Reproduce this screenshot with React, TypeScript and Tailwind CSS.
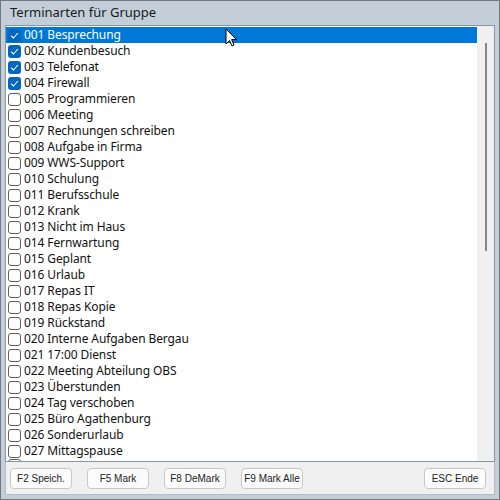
import React from 'react';

const items = [
  '001 Besprechung',
  '002 Kundenbesuch',
  '003 Telefonat',
  '004 Firewall',
  '005 Programmieren',
  '006 Meeting',
  '007 Rechnungen schreiben',
  '008 Aufgabe in Firma',
  '009 WWS-Support',
  '010 Schulung',
  '011 Berufsschule',
  '012 Krank',
  '013 Nicht im Haus',
  '014 Fernwartung',
  '015 Geplant',
  '016 Urlaub',
  '017 Repas IT',
  '018 Repas Kopie',
  '019 Rückstand',
  '020 Interne Aufgaben Bergau',
  '021 17:00 Dienst',
  '022 Meeting Abteilung OBS',
  '023 Überstunden',
  '024 Tag verschoben',
  '025 Büro Agathenburg',
  '026 Sonderurlaub',
  '027 Mittagspause',
];

const checked = [0, 1, 2, 3];

function CheckBox({ on }: { on: boolean }) {
  if (on) {
    return (
      <div className="w-[13px] h-[13px] rounded-[3px] bg-[#0067c0] flex items-center justify-center flex-shrink-0">
        <svg width="9" height="9" viewBox="0 0 9 9">
          <path d="M1 4.6 L3.4 7 L8 2" fill="none" stroke="white" strokeWidth="1.1" />
        </svg>
      </div>
    );
  }
  return <div className="w-[13px] h-[13px] rounded-[3px] border border-[#5f5f5f] bg-white flex-shrink-0" />;
}

function Btn({ label }: { label: string }) {
  return (
    <button
      className="w-[62px] h-[21px] px-0 rounded-[4px] border border-[#c8c8c8] bg-[#fbfbfb] text-[10px] leading-[19px] text-[#222] whitespace-nowrap flex-shrink-0"
      style={{ fontFamily: '"Liberation Sans", Arial, sans-serif' }}
    >
      {label}
    </button>
  );
}

export default function App() {
  return (
    <div
      className="w-[500px] h-[500px] bg-[#c3ced9] border border-[#707880] flex flex-col relative overflow-hidden"
      style={{ fontFamily: '"Noto Sans", "Open Sans", sans-serif' }}
    >
      <div className="h-[24px] pl-[9px] pt-[3px] text-[13px] text-[#1a1a1a] leading-[17px]">
        Terminarten für Gruppe
      </div>
      <div className="mx-[4px] h-[437px] border border-[#8696a6] bg-white flex overflow-hidden">
        <div className="flex-1 pt-[1px]">
          {items.map((label, i) => {
            const active = i === 0;
            return (
              <div
                key={label}
                className={`h-[16px] flex items-center pl-[1px] gap-[3px] text-[12px] leading-[16px] tracking-[-0.1px] ${
                  active ? 'bg-[#0078d7] text-white' : 'text-[#111]'
                }`}
              >
                <div className="ml-[1px]">
                  <CheckBox on={checked.includes(i)} />
                </div>
                <span>{label}</span>
              </div>
            );
          })}
          <div className="h-[3px] flex items-start pl-[2px] overflow-hidden">
            <div className="w-[13px] h-[13px] rounded-[3px] border border-[#5f5f5f] bg-white flex-shrink-0" />
          </div>
        </div>
        <div className="w-[17px] bg-[#f0f0f0] flex justify-center pt-[17px]">
          <div className="w-[2px] h-[208px] bg-[#868686]" />
        </div>
      </div>
      <div className="mx-[4px] mb-[4px] flex-1 bg-[#f0f0f0] border-x border-b border-[#b5bec8] flex items-center pl-[4px] pr-[8px] gap-[15px]">
        <Btn label="F2 Speich." />
        <Btn label="F5 Mark" />
        <Btn label="F8 DeMark" />
        <Btn label="F9 Mark Alle" />
        <div className="flex-1" />
        <Btn label="ESC Ende" />
      </div>
      <svg className="absolute left-[224px] top-[27px]" width="13" height="20" viewBox="0 0 13 20">
        <path d="M1 1 L1 16 L4.5 12.5 L7 18 L9 17 L6.6 11.6 L11.5 11.6 Z" fill="white" stroke="black" strokeWidth="1" />
      </svg>
    </div>
  );
}
